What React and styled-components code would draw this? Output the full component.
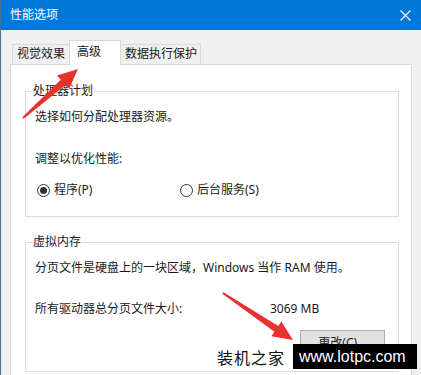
import React from 'react'
import styled, { createGlobalStyle } from 'styled-components'

const Global = createGlobalStyle`
  html, body { margin: 0; padding: 0; background: #f0f0f0; }
  * { box-sizing: border-box; }
`

const Window = styled.div`
  position: relative;
  width: 421px;
  height: 375px;
  overflow: hidden;
  background: #f0f0f0;
  border-left: 1px solid #4d6f95;
  font-family: "Segoe UI", "Noto Sans", "Noto Sans CJK SC", sans-serif;
  font-size: 12px;
  color: #1a1a1a;
`
const TitleBar = styled.div`
  height: 30px;
  background: #0078d7;
  color: #fff;
  display: flex;
  align-items: center;
  justify-content: space-between;
  padding: 0 10px 0 9px;
  font-size: 12px;
  line-height: 16px;
`
const Body = styled.div`
  padding: 9px 9px 0 9px;
`
const TabRow = styled.div`
  display: flex;
  align-items: flex-end;
  height: 25px;
  padding-left: 2px;
`
const Tab = styled.div`
  position: relative;
  height: ${p => (p.$active ? '25px' : '20px')};
  width: ${p => p.$w}px;
  margin-left: -1px;
  margin-bottom: ${p => (p.$active ? '-1px' : '0')};
  padding-left: ${p => p.$pad}px;
  padding-top: ${p => (p.$active ? '3px' : '1px')};
  background: ${p => (p.$active ? '#fff' : '#f0f0f0')};
  border: 1px solid #d9d9d9;
  border-bottom: none;
  z-index: ${p => (p.$active ? 2 : 1)};
  line-height: 16px;
  white-space: nowrap;
  &:first-child { margin-left: 0; }
`
const Panel = styled.div`
  position: relative;
  background: #fff;
  border: 1px solid #d9d9d9;
  width: 402px;
  height: 330px;
  padding: 18px 12px 0 14px;
`
const Group = styled.fieldset`
  margin: ${p => p.$top}px 0 0 0;
  padding: 0 13px 18px 9px;
  border: 1px solid #dcdcdc;
  min-width: 0;
`
const Legend = styled.legend`
  margin-left: -3px;
  padding: 0 1px;
  line-height: 16px;
  font-size: 12px;
`
const Line = styled.div`
  margin-top: ${p => p.$top}px;
  line-height: 16px;
  white-space: nowrap;
`
const RadioRow = styled.div`
  margin-top: 15px;
  display: grid;
  grid-template-columns: 143px auto;
  line-height: 16px;
`
const RadioItem = styled.label`
  display: flex;
  align-items: center;
  gap: 4px;
  margin-left: 2px;
`
const RadioDot = styled.span`
  width: 13px;
  height: 13px;
  border-radius: 50%;
  border: 1px solid #333;
  background: #fff;
  display: flex;
  align-items: center;
  justify-content: center;
  &::after {
    content: '';
    width: 7px;
    height: 7px;
    border-radius: 50%;
    background: #333;
    display: ${p => (p.$on ? 'block' : 'none')};
  }
`
const SizeRow = styled.div`
  margin-top: 25px;
  display: grid;
  grid-template-columns: 235px auto;
  line-height: 16px;
`
const ButtonRow = styled.div`
  margin-top: 13px;
  display: flex;
  justify-content: flex-end;
`
const Button = styled.button`
  width: 85px;
  height: 23px;
  background: #e1e1e1;
  border: 1px solid #adadad;
  font: inherit;
  color: #1a1a1a;
  padding: 0;
`
const Overlay = styled.svg`
  position: absolute;
  left: 0;
  top: 0;
  pointer-events: none;
`
const Watermark = styled.div`
  position: absolute;
  left: 216px;
  top: 344px;
  display: flex;
  align-items: center;
`
const MarkName = styled.span`
  font-family: "Noto Sans CJK SC", sans-serif;
  font-size: 16px;
  letter-spacing: 1px;
  color: #111;
  width: 76px;
`
const MarkUrl = styled.span`
  background: #000;
  color: #fff;
  font-family: "Liberation Sans", Arial, sans-serif;
  font-size: 16px;
  height: 25px;
  width: 124px;
  padding-left: 6px;
  display: flex;
  align-items: center;
`

function arrow(tx, ty, px, py) {
  const dx = px - tx, dy = py - ty
  const len = Math.hypot(dx, dy)
  const ux = dx / len, uy = dy / len
  const nx = -uy, ny = ux
  const hl = 20, hw = 9, w0 = 1, w1 = 3.5
  const bx = px - ux * hl, by = py - uy * hl
  const pts = [
    [tx + nx * w0, ty + ny * w0],
    [bx + nx * w1, by + ny * w1],
    [bx + nx * hw, by + ny * hw],
    [px, py],
    [bx - nx * hw, by - ny * hw],
    [bx - nx * w1, by - ny * w1],
    [tx - nx * w0, ty - ny * w0],
  ]
  return pts.map(p => p.map(v => v.toFixed(1)).join(',')).join(' ')
}

export default function App() {
  return (
    <>
      <Global />
      <Window>
        <TitleBar>
          <span>性能选项</span>
          <svg width="11" height="11" viewBox="0 0 11 11">
            <path d="M0.5 0.5 L10.5 10.5 M10.5 0.5 L0.5 10.5" stroke="#fff" strokeWidth="1.1" />
          </svg>
        </TitleBar>
        <Body>
          <TabRow>
            <Tab $w={58} $pad={4}>视觉效果</Tab>
            <Tab $w={52} $pad={7} $active>高级</Tab>
            <Tab $w={81} $pad={4}>数据执行保护</Tab>
          </TabRow>
          <Panel>
            <Group $top={0}>
              <Legend>处理器计划</Legend>
              <Line $top={10}>选择如何分配处理器资源。</Line>
              <Line $top={26}>调整以优化性能:</Line>
              <RadioRow>
                <RadioItem><RadioDot $on />程序(P)</RadioItem>
                <RadioItem><RadioDot />后台服务(S)</RadioItem>
              </RadioRow>
            </Group>
            <Group $top={17}>
              <Legend>虚拟内存</Legend>
              <Line $top={10}>分页文件是硬盘上的一块区域，Windows 当作 RAM 使用。</Line>
              <SizeRow>
                <span>所有驱动器总分页文件大小:</span>
                <span>3069 MB</span>
              </SizeRow>
              <ButtonRow>
                <Button>更改(C)...</Button>
              </ButtonRow>
            </Group>
          </Panel>
        </Body>
        <Overlay width="421" height="375">
          <polygon points={arrow(22, 118, 77, 69)} fill="#e8322d" />
          <polygon points={arrow(222, 293, 292, 340)} fill="#e8322d" />
        </Overlay>
        <Watermark>
          <MarkName>装机之家</MarkName>
          <MarkUrl>www.lotpc.com</MarkUrl>
        </Watermark>
      </Window>
    </>
  )
}
